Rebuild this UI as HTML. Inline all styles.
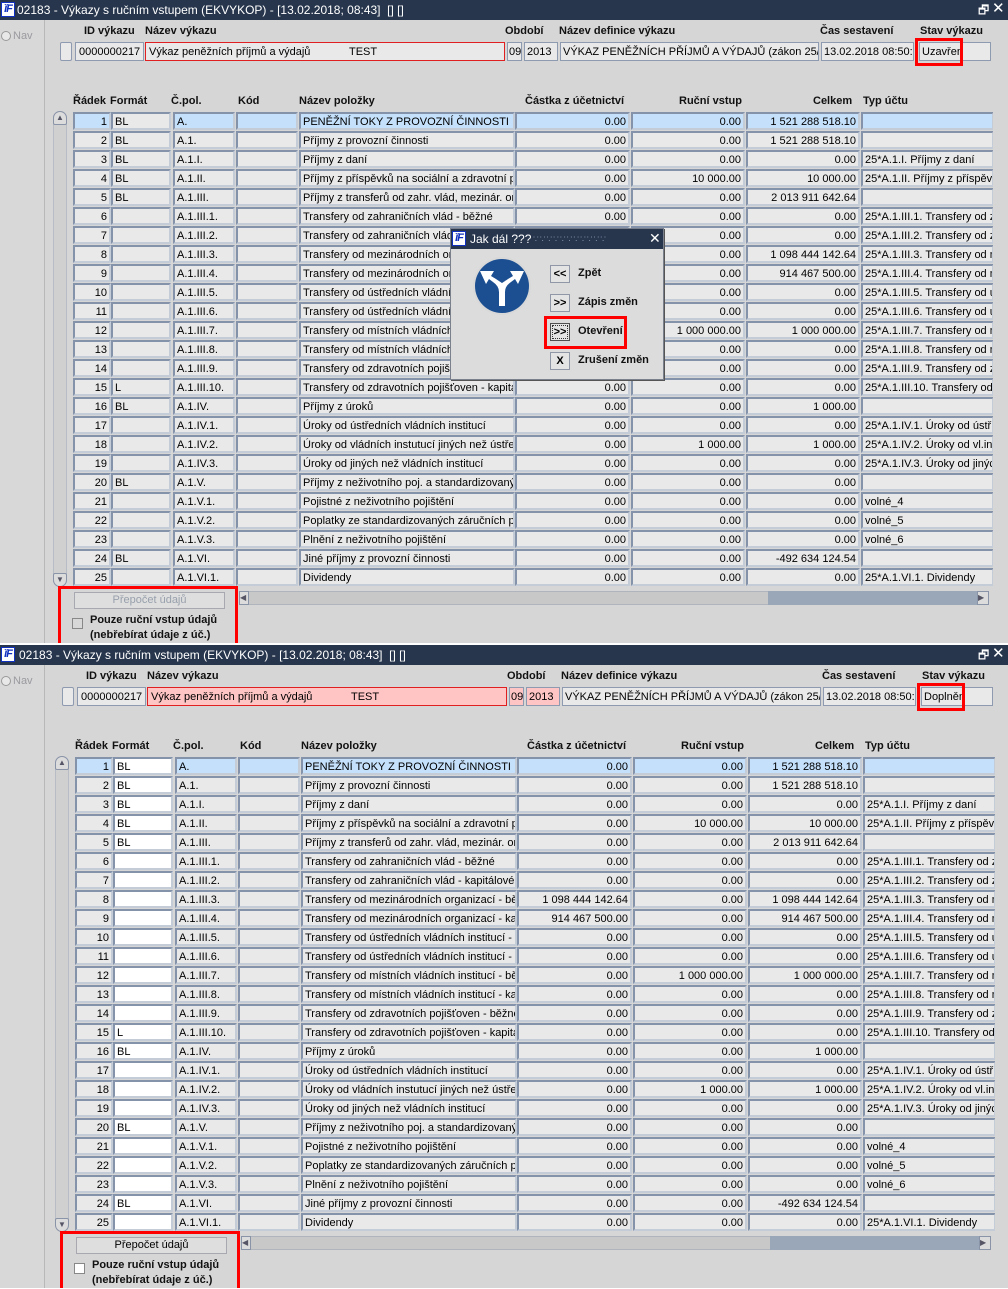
<!DOCTYPE html>
<html><head><meta charset="utf-8">
<style>
*{box-sizing:border-box;margin:0;padding:0}
body{width:1008px;height:1289px;background:#fff;position:relative;overflow:hidden;font-family:"Liberation Sans",Arial,sans-serif;font-size:11px;color:#000}
.a{position:absolute;white-space:nowrap;overflow:hidden}
.panel{position:absolute;left:0;width:1008px;height:643px;background:#d6d6d6;overflow:hidden}
.tb{position:absolute;left:0;top:0;width:1008px;height:20px;background:#27364d;color:#fff;font-size:12px;line-height:20px}
.logo{position:absolute;width:14px;height:15px;background:#fff;border:1px solid #1030c0;color:#1030c0;font:bold italic 11px "Liberation Sans",sans-serif;line-height:13px;text-align:center;letter-spacing:-1px}
.nav{position:absolute;left:0;top:20px;width:45px;height:623px;background:#d8d8d8;border-right:1px solid #b8b8b8}
.lbl{position:absolute;font-weight:bold;font-size:11px;color:#111;white-space:nowrap}
.c{position:absolute;height:18px;background:#e9e9e9;border:2px solid;border-color:#8492aa #c4ccd8 #c4ccd8 #8492aa;line-height:16px;padding:0 2px;white-space:nowrap;overflow:hidden}
.r{text-align:right}
.sel{background:#c4e0fb}
.f{position:absolute;height:19px;background:#e9e9e9;border:1px solid #8e9ab0;line-height:19px;padding:0 3px;white-space:nowrap;overflow:hidden}
.red{position:absolute;border:3px solid #f00}
</style></head><body>
<div id="root"></div>
<script>
var rows=[
["1","BL","A.","","PENĚŽNÍ TOKY Z PROVOZNÍ ČINNOSTI","0.00","0.00","1 521 288 518.10",""],
["2","BL","A.1.","","Příjmy z provozní činnosti","0.00","0.00","1 521 288 518.10",""],
["3","BL","A.1.I.","","Příjmy z daní","0.00","0.00","0.00","25*A.1.I. Příjmy z daní"],
["4","BL","A.1.II.","","Příjmy z příspěvků na sociální a zdravotní pojištění","0.00","10 000.00","10 000.00","25*A.1.II. Příjmy z příspěvků"],
["5","BL","A.1.III.","","Příjmy z transferů od zahr. vlád, mezinár. org.","0.00","0.00","2 013 911 642.64",""],
["6","","A.1.III.1.","","Transfery od zahraničních vlád - běžné","0.00","0.00","0.00","25*A.1.III.1. Transfery od zahraničních"],
["7","","A.1.III.2.","","Transfery od zahraničních vlád  - kapitálové","0.00","0.00","0.00","25*A.1.III.2. Transfery od zahraničních"],
["8","","A.1.III.3.","","Transfery od mezinárodních organizací - běžné","1 098 444 142.64","0.00","1 098 444 142.64","25*A.1.III.3. Transfery od mezinárodních"],
["9","","A.1.III.4.","","Transfery od mezinárodních organizací - kapitálové","914 467 500.00","0.00","914 467 500.00","25*A.1.III.4. Transfery od mezinárodních"],
["10","","A.1.III.5.","","Transfery od ústředních vládních institucí - běžné","0.00","0.00","0.00","25*A.1.III.5. Transfery od ústředních"],
["11","","A.1.III.6.","","Transfery od ústředních vládních institucí - kapitálové","0.00","0.00","0.00","25*A.1.III.6. Transfery od ústředních"],
["12","","A.1.III.7.","","Transfery od místních vládních institucí - běžné","0.00","1 000 000.00","1 000 000.00","25*A.1.III.7. Transfery od místních"],
["13","","A.1.III.8.","","Transfery od místních vládních institucí - kapitálové","0.00","0.00","0.00","25*A.1.III.8. Transfery od místních"],
["14","","A.1.III.9.","","Transfery od zdravotních pojišťoven - běžné","0.00","0.00","0.00","25*A.1.III.9. Transfery od zdravotních"],
["15","L","A.1.III.10.","","Transfery od zdravotních pojišťoven - kapitálové","0.00","0.00","0.00","25*A.1.III.10. Transfery od zdrav"],
["16","BL","A.1.IV.","","Příjmy z úroků","0.00","0.00","1 000.00",""],
["17","","A.1.IV.1.","","Úroky od ústředních vládních institucí","0.00","0.00","0.00","25*A.1.IV.1. Úroky od ústř."],
["18","","A.1.IV.2.","","Úroky od vládních instutucí jiných než ústředních","0.00","1 000.00","1 000.00","25*A.1.IV.2. Úroky od vl.inst."],
["19","","A.1.IV.3.","","Úroky od jiných než vládních institucí","0.00","0.00","0.00","25*A.1.IV.3. Úroky od jiných"],
["20","BL","A.1.V.","","Příjmy z neživotního poj. a standardizovaných","0.00","0.00","0.00",""],
["21","","A.1.V.1.","","Pojistné z neživotního pojištění","0.00","0.00","0.00","volné_4"],
["22","","A.1.V.2.","","Poplatky ze standardizovaných záručních programů","0.00","0.00","0.00","volné_5"],
["23","","A.1.V.3.","","Plnění z neživotního pojištění","0.00","0.00","0.00","volné_6"],
["24","BL","A.1.VI.","","Jiné příjmy z provozní činnosti","0.00","0.00","-492 634 124.54",""],
["25","","A.1.VI.1.","","Dividendy","0.00","0.00","0.00","25*A.1.VI.1. Dividendy"]];
var cols=[[73,38,1],[111,60,0],[173,62,0],[236,62,0],[299,216,0],[515,115,1],[631,114,1],[746,114,1],[861,133,0]];
function panel(top,dx,second){
 var h='<div class="panel" style="top:'+top+'px">';
 h+='<div class="tb"><div class="logo" style="left:1px;top:2px">ĭF</div><span class="a" style="left:'+(17+dx)+'px;top:0">02183 - Výkazy s ručním vstupem (EKVYKOP) - [13.02.2018; 08:43]&nbsp; [] []</span><span class="a" style="left:978px;top:0;font-size:12px">&#x1F5D7;</span><span class="a" style="left:992px;top:-1px;font-size:15px">✕</span></div>';
 h+='<div class="nav"></div><div class="a" style="left:1px;top:31px;width:10px;height:10px;border-radius:50%;border:1px solid #999;background:#e8e8e8"></div><div class="a" style="left:13px;top:30px;color:#9a9aa0">Nav</div>';
 var X=function(x){return x+dx};
 [["ID výkazu",84],["Název výkazu",145],["Období",505],["Název definice výkazu",559],["Čas sestavení",820],["Stav výkazu",920]].forEach(function(l){h+='<div class="lbl" style="left:'+X(l[1])+'px;top:25px">'+l[0]+'</div>'});
 var pink=second?'background:#ffc4c4;':'';
 h+='<div class="f" style="left:'+X(60)+'px;top:42px;width:12px;border-radius:2px"></div>';
 h+='<div class="f r" style="left:'+X(75)+'px;top:42px;width:69px">0000000217</div>';
 h+='<div class="f" style="left:'+X(145)+'px;top:42px;width:360px;'+pink+'border-color:#e02020">Výkaz peněžních příjmů a výdajů<span style="position:absolute;left:203px">TEST</span></div>';
 h+='<div class="f" style="left:'+X(507)+'px;top:42px;width:15px;padding:0 1px;'+pink+'">09</div>';
 h+='<div class="f" style="left:'+X(524)+'px;top:42px;width:34px;padding:0 2px;'+pink+'">2013</div>';
 h+='<div class="f" style="left:'+X(560)+'px;top:42px;width:259px;padding:0 2px">VÝKAZ PENĚŽNÍCH PŘÍJMŮ A VÝDAJŮ (zákon 25/2015)</div>';
 h+='<div class="f" style="left:'+X(821)+'px;top:42px;width:93px;padding:0 2px">13.02.2018 08:50:55</div>';
 h+='<div class="f" style="left:'+X(919)+'px;top:42px;width:72px;padding:0 2px">'+(second?'Doplněn':'Uzavřen')+'</div>';
 h+='<div class="red" style="left:'+X(915)+'px;top:38px;width:48px;height:28px"></div>';
 [["Řádek",73],["Formát",110],["Č.pol.",171],["Kód",238],["Název položky",299],["Částka z účetnictví",525],["Ruční vstup",679],["Celkem",813],["Typ účtu",863]].forEach(function(l){h+='<div class="lbl" style="left:'+X(l[1])+'px;top:95px">'+l[0]+'</div>'});
 rows.forEach(function(r,i){
  var y=112+i*19;
  cols.forEach(function(c,j){
   var v=r[j];
   if(!second&&j==5&&(i==7||i==8))v="0.00";
   var st='left:'+X(c[0])+'px;top:'+y+'px;width:'+c[1]+'px;';
   if(second&&j==1)st+='background:#fff;';
   h+='<div class="c'+(c[2]?' r':'')+(i==0&&j!=1?' sel':'')+'" style="'+st+'">'+v+'</div>';
  });
 });
 h+='<div class="a" style="left:'+X(993)+'px;top:110px;width:15px;height:480px;background:#d6d6d6"></div>';
 h+='<div class="a" style="left:'+X(53)+'px;top:111px;width:14px;height:476px;background:#d0d0d0;border:1px solid #b8bcc4;border-radius:7px"></div>';
 h+='<div class="a" style="left:'+X(53)+'px;top:111px;width:14px;height:14px;border:1px solid #8a94a8;border-radius:7px 7px 2px 2px;background:#dcdcdc;font-size:8px;line-height:12px;text-align:center;color:#556">▲</div>';
 h+='<div class="a" style="left:'+X(53)+'px;top:573px;width:14px;height:14px;border:1px solid #8a94a8;border-radius:2px 2px 7px 7px;background:#dcdcdc;font-size:8px;line-height:12px;text-align:center;color:#556">▼</div>';
 h+='<div class="a" style="left:'+X(239)+'px;top:591px;width:750px;height:14px;background:#c8c8c8;border:1px solid #b0b4bc"></div>';
 h+='<div class="a" style="left:'+X(768)+'px;top:591px;width:209px;height:14px;background:#9aa7b8"></div>';
 h+='<div class="a" style="left:'+X(239)+'px;top:591px;width:10px;height:14px;background:#dcdcdc;border:1px solid #8a94a8;font-size:8px;line-height:12px;color:#556">◀</div>';
 h+='<div class="a" style="left:'+X(977)+'px;top:591px;width:12px;height:14px;background:#dcdcdc;border:1px solid #8a94a8;font-size:8px;line-height:12px;color:#556">▶</div>';
 h+='<div class="a" style="left:'+X(74)+'px;top:592px;width:151px;height:17px;border:1px solid #a8a8b0;background:#dedede;text-align:center;line-height:15px;color:'+(second?'#000':'#98a0ac')+'">Přepočet údajů</div>';
 h+='<div class="a" style="left:'+X(72)+'px;top:618px;width:11px;height:11px;border:1px solid #888;background:'+(second?'#fff':'#d8d8d8')+'"></div>';
 h+='<div class="lbl" style="left:'+X(90)+'px;top:614px">Pouze ruční vstup údajů</div><div class="lbl" style="left:'+X(90)+'px;top:629px">(nebřebírat údaje z úč.)</div>';
 h+='<div class="red" style="left:'+X(58)+'px;top:586px;width:180px;height:60px"></div>';
 h+='</div>';
 return h;
}
var dlg='<div class="a" style="left:450px;top:228px;width:214px;height:152px;background:#dcdcdc;border:1px solid #7a808c;box-shadow:1px 1px 0 #555">'
+'<div class="a" style="left:0;top:0;width:212px;height:20px;background:#27364d;color:#fff;font-size:12px;line-height:20px"><div class="logo" style="left:1px;top:2px">ĭF</div><span class="a" style="left:19px;top:0">Jak dál ???</span><span class="a" style="left:82px;top:0;width:108px;color:#8090a8;font-size:9px;letter-spacing:1px">∵∵∵∵∵∵∵∵∵∵∵</span><span class="a" style="left:198px;top:-1px;font-size:14px">✕</span></div>'
+'<svg class="a" style="left:21px;top:27px" width="60" height="60" viewBox="0 0 60 60"><circle cx="30" cy="30" r="29" fill="#d8d8d8"/><circle cx="30" cy="30" r="27" fill="#1b4f92"/><path d="M27 50 L27 36 Q27 30 21 26 L17 23 L14 28 L8 15 L22 15 L19 20 L24 23 Q30 27 30 27 Q30 27 36 23 L41 20 L38 15 L52 15 L46 28 L43 23 L39 26 Q33 30 33 36 L33 50 Z" fill="#fff"/></svg>'
+'<div class="a" style="left:99px;top:36px;width:20px;height:18px;border:1px solid #9098a8;background:#e4e4e4;text-align:center;line-height:16px;font-weight:bold">&lt;&lt;</div><div class="lbl" style="left:127px;top:38px">Zpět</div>'
+'<div class="a" style="left:99px;top:65px;width:20px;height:18px;border:1px solid #9098a8;background:#e4e4e4;text-align:center;line-height:16px;font-weight:bold">&gt;&gt;</div><div class="lbl" style="left:127px;top:67px">Zápis změn</div>'
+'<div class="a" style="left:99px;top:94px;width:20px;height:18px;border:1px solid #505050;background:#e4e4e4;text-align:center;line-height:16px;font-weight:bold;outline:1px dotted #333;outline-offset:-3px">&gt;&gt;</div><div class="lbl" style="left:127px;top:96px">Otevření</div>'
+'<div class="red" style="left:93px;top:87px;width:83px;height:33px"></div>'
+'<div class="a" style="left:99px;top:123px;width:20px;height:18px;border:1px solid #9098a8;background:#e4e4e4;text-align:center;line-height:16px;font-weight:bold">X</div><div class="lbl" style="left:127px;top:125px">Zrušení změn</div>'
+'</div>';
document.getElementById('root').innerHTML=panel(0,0,false)+panel(645,2,true)+dlg;
</script>
</body></html>
